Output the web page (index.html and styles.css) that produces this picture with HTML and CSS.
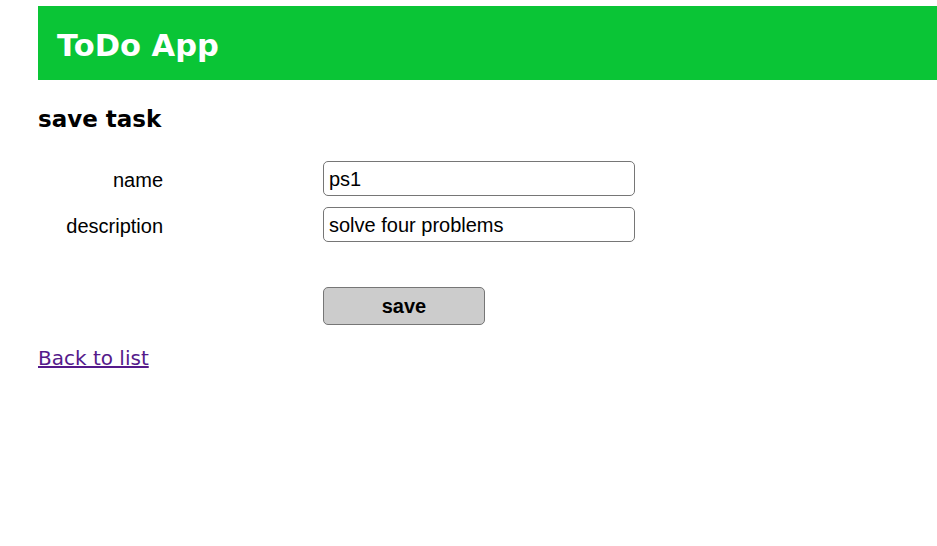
FILE: index.html
```html
<!DOCTYPE html>
<html>
<head>
<meta charset="utf-8">
<title>ToDo App</title>
<link rel="stylesheet" href="styles.css">
</head>
<body>
<header class="app-header">
  <h1 class="app-title">ToDo App</h1>
</header>
<main class="content">
  <h2 class="page-title">save task</h2>
  <form class="task-form">
    <label class="field-label" for="name">name</label>
    <input class="field-input" id="name" type="text" value="ps1">
    <label class="field-label" for="description">description</label>
    <input class="field-input" id="description" type="text" value="solve four problems">
    <span class="spacer"></span>
    <button class="save-btn" type="button">save</button>
  </form>
  <a class="back-link" href="#">Back to list</a>
</main>
</body>
</html>
```
FILE: styles.css
```css
html, body {
  margin: 0;
  padding: 0;
  background: #fff;
}
body {
  padding: 6px 0 0 38px;
  font-family: "DejaVu Sans", Verdana, sans-serif;
}
.app-header {
  box-sizing: border-box;
  background: #0ac536;
  height: 74px;
  display: flex;
  align-items: center;
  padding: 6px 0 0 19px;
}
.app-title {
  margin: 0;
  color: #fff;
  font-family: "DejaVu Sans", Verdana, sans-serif;
  font-weight: bold;
  font-size: 30.5px;
  line-height: 1;
}
.content {
  padding-top: 24px;
}
.page-title {
  margin: 0;
  font-family: "DejaVu Sans", Verdana, sans-serif;
  font-weight: bold;
  font-size: 23px;
  line-height: 30px;
  color: #000;
}
.task-form {
  margin-top: 27px;
  display: grid;
  grid-template-columns: 125px 312px;
  column-gap: 160px;
  row-gap: 11px;
  align-items: center;
}
.field-label {
  text-align: right;
  font-family: "Liberation Sans", Arial, sans-serif;
  font-size: 20px;
  color: #000;
  padding-top: 4px;
}
.field-input {
  box-sizing: border-box;
  width: 312px;
  height: 35px;
  margin: 0;
  padding: 2px 5px 0;
  border: 1px solid #767676;
  border-radius: 5px;
  font-family: "Liberation Sans", Arial, sans-serif;
  font-size: 20px;
  color: #000;
  background: #fff;
}
.spacer {
  grid-column: 1;
}
.save-btn {
  margin-top: 34px;
  box-sizing: border-box;
  width: 162px;
  height: 38px;
  border: 1px solid #767676;
  border-radius: 5px;
  background: #cccccc;
  font-family: "Liberation Sans", Arial, sans-serif;
  font-weight: bold;
  font-size: 20px;
  color: #000;
  padding: 0;
}
.back-link {
  display: inline-block;
  margin-top: 21px;
  font-family: "DejaVu Sans", Verdana, sans-serif;
  font-size: 20px;
  color: #551a8b;
}
```
